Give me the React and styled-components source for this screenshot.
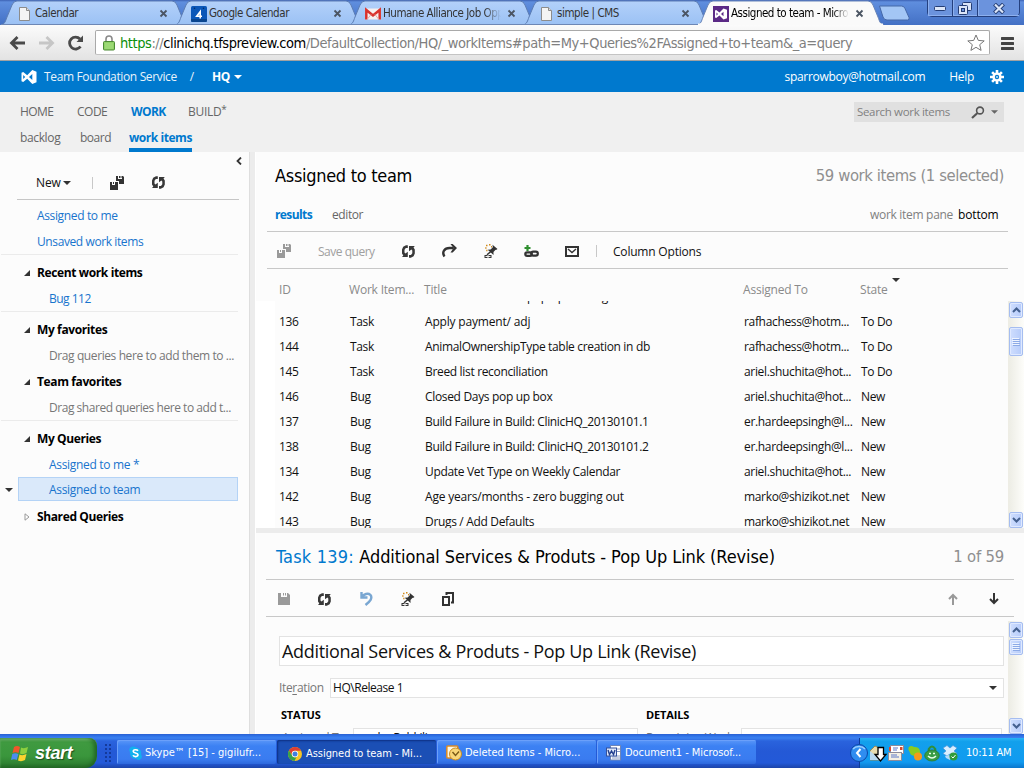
import React from 'react';
import styled, { createGlobalStyle, css } from 'styled-components';

const Global = createGlobalStyle`
  * { box-sizing: border-box; }
  body { margin: 0; overflow: hidden; background: #fcfcfc; }
  svg { display: block; flex: none; }
`;
const ui = `'Open Sans', 'Noto Sans', sans-serif`;
const tahoma = `'DejaVu Sans Condensed', 'DejaVu Sans', sans-serif`;

const Screen = styled.div`
  width: 1024px; height: 768px; overflow: hidden;
  display: flex; flex-direction: column;
  font: 12px/16px ${ui}; letter-spacing: -0.3px; color: #111; background: #fcfcfc;
`;
const Txt = styled.span`
  white-space: pre; flex: none;
  font-family: ${p => (p.$t ? tahoma : ui)};
  font-size: ${p => p.$s || 12}px;
  letter-spacing: ${p => p.$ls ?? -0.36}px;
  font-weight: ${p => (p.$b ? 700 : 400)};
  color: ${p => p.$c || '#111'};
  margin-left: ${p => p.$ml || 0}px;
`;
const ToolText = styled(Txt)`padding-top: 2px;`;

/* ---------- browser frame ---------- */
const TabStrip = styled.div`
  height: 25px; flex: none; display: flex; padding-left: 1px; position: relative;
  background: linear-gradient(#3d62b4 0, #5f8ede 2px, #4f7dd0 60%, #4370c4 100%);
`;
const TabBox = styled.div`
  width: 187px; height: 25px; margin-right: -13px; flex: none; position: relative;
  z-index: ${p => (p.$active ? 2 : 1)};
`;
const TabShape = styled.svg`position: absolute; inset: 0;`;
const TabInner = styled.div`
  position: relative; height: 25px; display: flex; align-items: center; padding: 2px 20px 0 16px;
`;
const TabLabel = styled.div`
  flex: 1; margin-left: 2px; white-space: nowrap; overflow: hidden; width: 0; margin-right: 6px;
  font: 11.5px/17px ${tahoma}; letter-spacing: ${p => p.$ls ?? -0.42}px; color: ${p => (p.$active ? '#000' : '#333')};
  ${p => p.$fade && css`mask-image: linear-gradient(90deg, #000 86%, transparent 100%);`}
`;
const WindowButtons = styled.div`
  position: absolute; right: 4px; top: 0; width: 93px; height: 17px; display: flex;
  border: 1px solid #24407f; border-top: 0; border-radius: 0 0 5px 5px; background: #6b93dd;
`;
const WinBtn = styled.div`
  width: ${p => p.$w}px; display: flex; justify-content: center; align-items: center;
  border-right: ${p => (p.$last ? 0 : 1)}px solid #24407f;
  box-shadow: inset 1px -1px 0 #8db0ee;
`;
const Toolbar = styled.div`
  height: 36px; flex: none; display: flex; align-items: center; padding: 1px 9px 0 9px;
  background: linear-gradient(#fbfbfb, #e3e3e3); border-bottom: 1px solid #a2a2a2;
`;
const Omnibox = styled.div`
  margin-left: 10px; width: 895px; height: 25px; background: #fff; display: flex; align-items: center;
  border: 1px solid #a9a9a9; border-bottom-color: #c4c4c4; border-radius: 2px; padding: 0 4px 0 7px; margin-top: -1px;
`;
const Url = styled.div`
  flex: 1; margin-left: 5px; white-space: nowrap; font: 14.5px/22px ${tahoma}; letter-spacing: -0.44px; color: #808080;
  i { font-style: normal; color: #0a8f0a; } b { font-weight: 400; color: #000; }
`;

/* ---------- service header ---------- */
const Header = styled.header`
  height: 31px; flex: none; background: #0079ce; display: flex; align-items: center; padding: 0 20px 0 21px;
`;
const Nav = styled.nav`
  height: 60px; flex: none; background: #f0f0f0; padding: 10px 20px 0; display: flex; justify-content: space-between;
`;
const NavRow = styled.div`display: flex; align-items: flex-start; height: ${p => p.$h}px; line-height: ${p => p.$lh}px;`;
const ActiveTab = styled.div`width: 63px; margin-left: 18px; height: 28px; border-bottom: 4px solid #0079ce;`;
const Star = styled.span`font-size: 10px; line-height: 14px; color: #666;`;
const Search = styled.div`
  width: 150px; height: 20px; background: #e0e0e0; display: flex; align-items: center; padding: 0 5px 0 3px;
`;
const Grow = styled.div`flex: 1;`;

/* ---------- work area ---------- */
const Work = styled.div`height: 582px; flex: none; display: flex;`;
const Sidebar = styled.aside`width: 249px; flex: none;`;
const SideTools = styled.div`
  display: flex; align-items: center; height: 34px; margin: 0 10px 0 17px; padding: 0 0 0 19px; border-bottom: 1px solid #c6c6c6;
`;
const Collapse = styled.div`display: flex; justify-content: flex-end; height: 14px; padding: 5px 7px 0 0;`;
const SideGroup = styled.div`
  width: 237px; margin-left: 1px; padding-top: ${p => p.$pt ?? 4}px; border-bottom: ${p => (p.$last ? 0 : 1)}px solid #ebebeb;
`;
const SideItem = styled.div`
  height: 26px; line-height: 24px; display: flex; align-items: center; padding: 2px 0 0 ${p => p.$in}px;
`;
const SelectedItem = styled.div`height: 26px; display: flex; align-items: flex-start; padding-left: 4px;`;
const SelectedCaret = styled.div`height: 25px; display: flex; align-items: center;`;
const Selected = styled.div`
  height: 24px; width: 220px; margin-left: 5px; background: #dae9fa; border: 1px solid #b4d3f6;
  line-height: 24px; padding-left: 30px;
`;
const VSplit = styled.div`width: 7px; flex: none; background: #ececec; border-left: 1px solid #dedede; border-right: 1px solid #fff;`;
const Main = styled.main`width: 768px; flex: none; display: flex; flex-direction: column;`;
const TitleRow = styled.div`
  display: flex; justify-content: space-between; height: ${p => p.$h}px; line-height: ${p => p.$lh || p.$h}px; padding: 0 20px 0 ${p => p.$l ?? 19}px;
`;
const Tools = styled.div`
  display: flex; align-items: center; height: 38px; margin: 0 ${p => p.$r}px 0 ${p => p.$l}px;
  border-top: 1px solid #c8c8c8; border-bottom: 1px solid #c8c8c8; padding: 2px ${p => p.$pr || 0}px 0 ${p => p.$pl}px;
`;
const Slot = styled.div`width: ${p => p.$w}px; margin-left: ${p => p.$ml || 0}px; flex: none; display: flex; align-items: center;`;
const Bar = styled.div`width: 1px; height: 12px; background: #c8c8c8; flex: none;`;
const GridHead = styled.div`height: 32px; display: flex; padding: 12px 0 0 23px; line-height: 17px;`;
const HeadCell = styled.div`width: ${p => p.$w}px; flex: none; color: #8a8a8a; letter-spacing: -0.2px; display: flex;`;
const SortMark = styled.div`margin: -3px 0 0 4px;`;
const GridBody = styled.div`height: 227px; display: flex; flex: none; background: #fff; padding-left: 19px;`;
const Rows = styled.div`
  flex: 1; height: 227px; overflow: hidden; background: #fcfcfc; display: flex; flex-direction: column; justify-content: flex-end;
`;
const Row = styled.div`display: flex; height: 25px; flex: none; line-height: 26px; padding-left: 4px; position: relative; top: 6px;`;
const Cell = styled.div`width: ${p => p.$w}px; flex: none; white-space: nowrap; letter-spacing: ${p => p.$ls ?? -0.33}px;`;
const ScrollTrack = styled.div`
  width: 16px; flex: none; background: linear-gradient(90deg, #ededE5, #fdfdfa); border-left: 1px solid #eeede5;
  display: flex; flex-direction: column; padding-top: 1px;
`;
const ScrollPart = styled.div`
  width: 14px; height: ${p => p.$h}px; margin-top: ${p => p.$mt || 0}px; flex: none; display: flex; align-items: center; justify-content: center;
  background: linear-gradient(90deg, #cfdefe, #b5cbfa); border: 1px solid #a5bdf0; border-radius: 2px; box-shadow: inset 0 0 0 1px #dfe9ff;
`;
const HSplit = styled.div`height: 5px; flex: none; background: #ececec;`;
const Form = styled.div`flex: 1; min-height: 0; display: flex; margin-top: 4px; overflow: hidden;`;
const Fields = styled.div`flex: 1; padding: 15px 4px 0 23px;`;
const TitleInput = styled.div`
  height: 30px; background: #fff; border: 1px solid #e3e3e3; line-height: 29px; padding-left: 2px;
`;
const FieldRow = styled.div`display: flex; margin-top: ${p => p.$mt}px; line-height: 20px; height: 20px;`;
const Input = styled.div`
  width: ${p => p.$w}px; height: 20px; background: #fff; border: 1px solid #e3e3e3; display: flex; align-items: center;
  justify-content: space-between; padding: 0 6px 0 2px; flex: none; line-height: 18px;
`;
const Label = styled.div`
  width: ${p => p.$w}px; padding-left: ${p => p.$pl || 0}px; flex: none; white-space: nowrap; color: #777;
  letter-spacing: ${p => p.$ls ?? -0.35}px; u { text-underline-offset: 2px; }
`;

/* ---------- taskbar ---------- */
const Taskbar = styled.footer`
  height: 34px; flex: none; display: flex; align-items: stretch;
  background: linear-gradient(#2a5fd0 0, #2f73e8 2px, #3c82f0 4px, #2a63dd 7px, #2459d6 50%, #2359d8 85%, #1c44a8 100%);
`;
const Start = styled.div`
  width: 97px; margin-top: 4px; display: flex; align-items: center; padding-left: 11px; border-radius: 0 8px 12px 0;
  background: linear-gradient(#5aa956 0, #3f9a40 15%, #3a963c 60%, #2f8232 85%, #256a27 100%);
  box-shadow: inset -3px 0 4px #1f6422, inset 0 2px 2px #7cc27a;
`;
const StartText = styled.span`
  font: italic 700 18px/20px 'Liberation Sans', sans-serif; color: #fff; letter-spacing: -0.3px; margin: 0 0 0 6px;
  text-shadow: 1px 1px 1px #1c4c1c;
`;
const Task = styled.div`
  width: 159px; height: 24px; margin: 6px 1px 0 0; border-radius: 2px; display: flex; align-items: center; padding-left: ${p => p.$pl || 12}px; flex: none;
  background: ${p => (p.$on ? '#1b4fb5' : 'linear-gradient(#5a96f8, #3c81f3 25%, #3a7bf0 80%, #2d68dc)')};
  box-shadow: ${p => (p.$on ? 'inset 1px 1px 2px #0d2f80' : 'inset 1px 1px 0 #6ba0fa')};
  padding-top: ${p => (p.$on ? 4 : 2)}px;
`;
const TaskLabel = styled.span`
  font: 11px/20px ${tahoma}; color: #fff; letter-spacing: ${p => p.$ls ?? 0}px; white-space: nowrap; margin-left: ${p => p.$ml ?? 4}px;
`;
const Dots = styled.div`
  width: 6px; height: 19px; margin: 10px 6px 0 8px;
  background: radial-gradient(circle at 1px 1px, #143a9c 1px, transparent 1.3px) 0 0 / 4px 4px;
`;
const Tray = styled.div`
  width: 165px; margin-top: 4px; display: flex; align-items: center; border-left: 1px solid #0c3b99;
  background: linear-gradient(#2ab3f5 0, #12a0ec 12%, #119af0 80%, #0b76cc 100%);
`;
const TrayToggle = styled.svg`margin-left: -10px;`;
const TrayIcons = styled.svg`margin-left: 2px;`;
const MenuIcon = styled.svg`margin-left: 11px;`;
const GearIcon = styled.svg`margin-left: 16px;`;
const NewTab = styled.svg`margin-left: 8px;`;

const Caret = ({ c = '#333', w = 8, h = 4 }) => (
  <svg width={w} height={h} viewBox="0 0 8 4"><path d="M0 0h8L4 4z" fill={c} /></svg>
);
const Close = () => (
  <svg width="9" height="9" viewBox="0 0 9 9"><path d="M1.500 1.500l6 6m0-6l-6 6" stroke="#4b5563" strokeWidth="1.800" /></svg>
);
const Page = () => (
  <svg width="16" height="16" viewBox="0 0 16 16"><path d="M2.500 1.500h7l3 3v10h-10z" fill="#f4f4f4" stroke="#8c8c8c" /><path d="M9.500 1.500v3h3" fill="#ddd" stroke="#8c8c8c" /></svg>
);
const VS = ({ s = 15, c = '#fff' }) => (
  <svg width={s} height={s} viewBox="0 0 16 16"><path fillRule="evenodd" fill={c} d="M0.500 3.800L2.200 3l4 3.200L11.300 1 15.500 2.800v10.400L11.300 15 6.200 9.800l-4 3.200-1.700-.8zM2.200 6v4l2-2zM11.300 5L8 8l3.300 3z" /></svg>
);
const Floppy = ({ c }) => <path fillRule="evenodd" fill={c} d="M0 0h3v4h6V0h1l2 2v10H0zM5 0h1v2.500H5zM7 0h1v2.500H7z" />;
const SaveAll = ({ c = '#333' }) => (
  <svg width="15" height="14" viewBox="0 0 15 14" fill={c}>
    <path d="M6 0h2v3h4V0h1l1 1v7H9V5H6zM9 0h1v2H9zM10.500 0h1v2h-1z" /><path d="M0 6h2v3h3V6h3v8H0zM3 6h1v2H3z" />
  </svg>
);
const Refresh = () => (
  <svg width="13" height="13" viewBox="0 0 13 13">
    <path d="M5.800 0.300H4L1.200 1.800 0 4.500v4L1.300 10.500 0 12h5.800V6.700L3.400 8.600 2.500 7.500V4.800L3.800 3h2z" fill="#383838" />
    <path d="M7 12.700h1.800l2.800-1.500L12.800 8.500v-4L11.500 2.500 12.800 1H7v5.300l2.400-1.900.9 1.100v2.700L9 10H7z" fill="#383838" />
  </svg>
);
const Redo = () => (
  <svg width="15" height="14" viewBox="0 0 15 14"><path d="M2.500 12.500C-.5 8 2.500 4 7.500 4h4" fill="none" stroke="#333" strokeWidth="2.400" /><path d="M8.500 0h2.200L15 4.100 10.700 8.500H8.500L11.500 4z" fill="#333" /></svg>
);
const Undo = () => (
  <svg width="13" height="14" viewBox="0 0 13 14" fill="none" stroke="#7aa7d2" strokeWidth="2.400"><path d="M1.500 0v5.500H7.500M1.500 5C4 2 8 .7 10.300 2.800 13 6 10 9.500 5.500 13" /></svg>
);
const Pin = () => (
  <svg width="14" height="14" viewBox="0 0 14 14">
    <path d="M2 1.500h1.500M5 .7h1.500M1.200 4h1.300M2.200 6.500h1.300M7 2.700h1" stroke="#d08a1c" strokeWidth="1.500" />
    <path d="M8.500 .8l5 4.200-1.500.9-.4-.2L9.500 8v3L3.700 5.800l2.900-.4 2.200-2.100z" fill="#333" /><path d="M7.500 7L3 10.800" stroke="#333" strokeWidth="1.500" />
    <path d="M.5 12.500h3m1 0h3" stroke="#333" strokeWidth="3" /><path d="M1.500 12.500h5" stroke="#eee" />
  </svg>
);
const AddLink = () => (
  <svg width="15" height="14" viewBox="0 0 15 14"><path d="M3.500 1v6M.5 4h6" stroke="#2f8f2f" strokeWidth="2.200" /><rect x="1.300" y="8.300" width="6.500" height="3.500" rx="1.800" fill="none" stroke="#333" strokeWidth="2.200" /><rect x="7.300" y="7.600" width="6.500" height="4" rx="1.900" fill="none" stroke="#333" strokeWidth="2.200" /></svg>
);
const Mail = () => (
  <svg width="14" height="11" viewBox="0 0 14 11"><rect x="1" y="1" width="12" height="9" fill="none" stroke="#333" strokeWidth="2" /><path d="M3 3l4 3.500L11 3" fill="none" stroke="#333" strokeWidth="1.400" /></svg>
);
const Copy = () => (
  <svg width="12" height="14" viewBox="0 0 12 14" fill="none" stroke="#333" strokeWidth="2"><path d="M1 5h6v8H1zM4.500 3V1H11v9.500H9" /></svg>
);
const Tri = ({ open }) => (
  <svg width="6" height="8" viewBox="0 0 6 8">{open ? <path d="M6 1v6H0z" fill="#333" /> : <path d="M1 .8v6.400L5 4z" fill="#fff" stroke="#999" />}</svg>
);
const Chev = ({ down }) => (
  <svg width="9" height="6" viewBox="0 0 9 6"><path d={down ? 'M1 1l3.500 3.500L8 1' : 'M1 5l3.500-3.500L8 5'} fill="none" stroke="#44608f" strokeWidth="2" /></svg>
);
const Grip = () => (
  <svg width="8" height="8" viewBox="0 0 8 8"><path d="M0 .5h7M0 2.500h7M0 4.500h7M0 6.500h7" stroke="#eef4ff" /><path d="M1 1.500h7M1 3.500h7M1 5.500h7M1 7.500h7" stroke="#8caae6" /></svg>
);
const Arrow = ({ c, down }) => (
  <svg width="10" height="12" viewBox="0 0 10 12"><path transform={down ? 'rotate(180 5 6)' : undefined} d="M5 12V2M1 6l4-4 4 4" fill="none" stroke={c} strokeWidth="2" /></svg>
);
const Calendar4 = () => (
  <svg width="16" height="16" viewBox="0 0 16 16"><rect width="16" height="16" rx="1.500" fill="#0b57b8" /><path d="M0 13h16v1.500a1.500 1.500 0 01-1.500 1.500h-13A1.500 1.500 0 010 14.500z" fill="#0a458f" /><circle cx="3.500" cy="2.300" r=".8" fill="#052c66" /><circle cx="12.500" cy="2.300" r=".8" fill="#052c66" /><path d="M9.200 12.500V5.700L5.700 10.300h5.300" stroke="#fff" strokeWidth="1.600" fill="none" /></svg>
);
const Gmail = () => (
  <svg width="16" height="16" viewBox="0 0 16 16"><rect y="2.500" width="16" height="11" rx="1" fill="#f6f0ef" /><path d="M1.300 13.500V4L8 9.500 14.700 4v9.500" fill="none" stroke="#d9322c" strokeWidth="2.500" /><path d="M2.500 13L6 8.500m7.500 4.500L10 8.500" stroke="#e5a9a5" /></svg>
);
const VSFav = () => (
  <svg width="16" height="16" viewBox="0 0 16 16"><rect width="16" height="16" fill="#5b2a86" /><path fillRule="evenodd" fill="#fff" d="M2 4.500L3.200 4l3.300 2.600L10.500 2.500l3.500 1.300v8.400l-3.500 1.300-4-4.100L3.200 12 2 11.500zM3.500 6.500v3L5 8zM10.500 5.800L8 8l2.500 2.200z" /></svg>
);
const Gear = () => (
  <GearIcon width="14" height="14" viewBox="0 0 14 14">
    <g stroke="#fff" strokeWidth="2.600"><path d="M7 0v14M0 7h14M2.100 2.100l9.800 9.800M11.900 2.100l-9.800 9.800" /></g>
    <circle cx="7" cy="7" r="4.600" fill="#fff" /><circle cx="7" cy="7" r="2.200" fill="#0079ce" /><circle cx="7" cy="7" r="1" fill="#bfe0f6" />
  </GearIcon>
);

const Tab = ({ icon, label, active, fade, ls }) => (
  <TabBox $active={active}>
    <TabShape width="187" height="25" viewBox="0 0 187 25">
      <defs><linearGradient id="tabfill" x2="0" y2="1"><stop stopColor="#b3d1fa" /><stop offset="1" stopColor="#9bc1f4" /></linearGradient></defs>
      <path d="M0 25C4 24 4.500 21 6 17L11 5Q12.500 1 16 1H171Q174.500 1 176 5L181 17C182.500 21 183 24 187 25z" fill={active ? '#fafafa' : 'url(#tabfill)'} stroke={active ? '#6683b8' : '#5c7db4'} />
      {!active && <path d="M0 24.500h187" stroke="#6d87b5" />}
      {active && <path d="M1 24.500h185" stroke="#fafafa" strokeWidth="2" />}
    </TabShape>
    <TabInner>{icon}<TabLabel $active={active} $fade={fade} $ls={ls}>{label}</TabLabel><Close /></TabInner>
  </TabBox>
);

const rows = [
  ['', '', 'Additional Services pop up message', '', ''],
  ['136', 'Task', 'Apply payment/ adj', 'rafhachess@hotm...', 'To Do'],
  ['144', 'Task', 'AnimalOwnershipType table creation in db', 'rafhachess@hotm...', 'To Do'],
  ['145', 'Task', 'Breed list reconciliation', 'ariel.shuchita@hot...', 'To Do'],
  ['146', 'Bug', 'Closed Days pop up box', 'ariel.shuchita@hot...', 'New'],
  ['137', 'Bug', 'Build Failure in Build: ClinicHQ_20130101.1', 'er.hardeepsingh@l...', 'New'],
  ['138', 'Bug', 'Build Failure in Build: ClinicHQ_20130101.2', 'er.hardeepsingh@l...', 'New'],
  ['134', 'Bug', 'Update Vet Type on Weekly Calendar', 'ariel.shuchita@hot...', 'New'],
  ['142', 'Bug', 'Age years/months - zero bugging out', 'marko@shizikot.net', 'New'],
  ['143', 'Bug', 'Drugs / Add Defaults', 'marko@shizikot.net', 'New'],
];
const titleSpacing = { 1: -0.18, 5: -0.36, 6: -0.36, 8: -0.2 };
const LINK = '#1874cd';

const GroupTitle = ({ children, closed }) => (
  <SideItem $in={23}><Tri open={!closed} /><Txt $b $ml={7} $c="#000" $ls={-0.38}>{children}</Txt></SideItem>
);

export default function App() {
  return (
    <Screen>
      <Global />
      <TabStrip>
        <Tab icon={<Page />} label="Calendar" />
        <Tab icon={<Calendar4 />} label="Google Calendar" />
        <Tab icon={<Gmail />} label="Humane Alliance Job Opp" fade ls={-0.48} />
        <Tab icon={<Page />} label="simple | CMS" />
        <Tab icon={<VSFav />} label="Assigned to team - Micro" active fade ls={-0.48} />
        <NewTab width="34" height="25" viewBox="0 0 34 25"><path d="M1.500 6.500h22q2.500 0 3.500 2.500l4 9q.8 2.500-1.500 2.500H9q-3 0-4-3z" transform="translate(-1 -.5)" fill="#a3c6f5" stroke="#4568a8" /></NewTab>
        <WindowButtons>
          <WinBtn $w={25}><svg width="12" height="6" viewBox="0 0 12 6"><rect x=".5" y="1.500" width="11" height="4" rx="1" fill="#dce6f8" stroke="#243d75" /></svg></WinBtn>
          <WinBtn $w={25}><svg width="14" height="13" viewBox="0 0 14 13" fill="#dce6f8" stroke="#243d75"><rect x="4.500" y=".5" width="9" height="8" rx="1" /><rect x=".5" y="3.500" width="9" height="9" rx="1" /><rect x="3.500" y="6.500" width="3" height="3" fill="#6b93dd" /></svg></WinBtn>
          <WinBtn $w={41} $last><svg width="12" height="11" viewBox="0 0 12 11"><path d="M1.500 1l9 9m0-9l-9 9" stroke="#243d75" strokeWidth="4" /><path d="M2 1.500l8 8m0-8l-8 8" stroke="#dce6f8" strokeWidth="2.200" /></svg></WinBtn>
        </WindowButtons>
      </TabStrip>
      <Toolbar>
        <svg width="76" height="18" viewBox="0 0 76 18" fill="none" strokeWidth="2.800">
          <path d="M16 9H3M8.500 3L2.500 9l6 6" stroke="#4a4a4a" /><path d="M30 9h13M37.500 3l6 6-6 6" stroke="#c6c6c6" />
          <path d="M71.500 12.500A6 6 0 1 1 71 5" stroke="#4a4a4a" /><path d="M74 1.500v6.500H67.500z" fill="#4a4a4a" />
        </svg>
        <Omnibox>
          <svg width="12" height="16" viewBox="0 0 12 16"><path d="M3 7V4a3 3 0 016 0v3" fill="none" stroke="#8a8a8a" strokeWidth="1.600" /><rect x=".5" y="6.500" width="11" height="8.500" rx="1" fill="#8fd167" stroke="#4b8a35" /><path d="M2 9h8M2 11h8M2 13h8" stroke="#a9e084" /></svg>
          <Url><i>https</i>://<b>clinichq.tfspreview.com</b>/DefaultCollection/HQ/_workItems#path=My+Queries%2FAssigned+to+team&amp;_a=query</Url>
          <svg width="18" height="17" viewBox="0 0 18 17"><path d="M9 1l2.300 5.400 5.900.5-4.500 3.800 1.400 5.700L9 13.300l-5.100 3.100 1.400-5.700L.8 6.900l5.900-.5z" fill="#fff" stroke="#777" /></svg>
        </Omnibox>
        <MenuIcon width="13" height="13" viewBox="0 0 13 13"><path d="M1 1.500h11M1 6.500h11M1 11.500h11" stroke="#444" strokeWidth="3" strokeLinecap="round" /></MenuIcon>
      </Toolbar>

      <Header>
        <VS s={16} />
        <Txt $c="#e8f3fb" $ml={7} $ls={-0.36}>Team Foundation Service</Txt>
        <Txt $c="#e8f3fb" $ml={13}>/</Txt>
        <Txt $c="#fff" $b $ml={18}>HQ</Txt>
        <Slot $w={12} $ml={4}><Caret c="#fff" /></Slot>
        <Grow />
        <Txt $c="#fff" $ls={-0.3}>sparrowboy@hotmail.com</Txt>
        <Txt $c="#fff" $ml={24} $ls={-0.3}>Help</Txt>
        <Gear />
      </Header>

      <Nav>
        <div>
          <NavRow $h={22} $lh={20}>
            <Slot $w={57}><Txt $c="#666" $ls={-0.6}>HOME</Txt></Slot><Slot $w={54}><Txt $c="#666" $ls={-0.5}>CODE</Txt></Slot>
            <Slot $w={57}><Txt $c="#0079ce" $b $ls={-0.6}>WORK</Txt></Slot><Txt $c="#666" $ls={-0.3}>BUILD</Txt><Star>*</Star>
          </NavRow>
          <NavRow $h={28} $lh={28}>
            <Slot $w={60}><Txt $c="#666">backlog</Txt></Slot><Slot $w={31}><Txt $c="#666" $ls={-0.5}>board</Txt></Slot>
            <ActiveTab><Txt $c="#0079ce" $b $ls={-0.45}>work items</Txt></ActiveTab>
          </NavRow>
        </div>
        <Search>
          <Txt $c="#808080" $s={11.5} $ls={-0.33}>Search work items</Txt><Grow />
          <svg width="14" height="13" viewBox="0 0 14 13"><circle cx="9" cy="4.500" r="3.400" fill="none" stroke="#555" strokeWidth="1.600" /><path d="M6.500 7L1 12" stroke="#555" strokeWidth="2.200" /></svg>
          <Slot $w={8} $ml={6}><Caret c="#666" w={7} /></Slot>
        </Search>
      </Nav>

      <Work>
        <Sidebar>
          <Collapse><svg width="6" height="8" viewBox="0 0 6 8"><path d="M5 .5L1.500 4 5 7.500" fill="none" stroke="#333" strokeWidth="1.800" /></svg></Collapse>
          <SideTools>
            <Txt $ls={-0.15}>New</Txt><Slot $w={29} $ml={2.5}><Caret /></Slot><Bar />
            <Slot $w={42} $ml={17}><SaveAll /></Slot><Refresh />
          </SideTools>
          <SideGroup $pt={2}>
            <SideItem $in={36}><Txt $c={LINK}>Assigned to me</Txt></SideItem>
            <SideItem $in={36}><Txt $c={LINK} $ls={-0.4}>Unsaved work items</Txt></SideItem>
          </SideGroup>
          <SideGroup><GroupTitle>Recent work items</GroupTitle><SideItem $in={48}><Txt $c={LINK} $ls={-0.5}>Bug 112</Txt></SideItem></SideGroup>
          <SideGroup>
            <GroupTitle>My favorites</GroupTitle><SideItem $in={48}><Txt $c="#777" $ls={-0.4}>Drag queries here to add them to ...</Txt></SideItem>
            <GroupTitle>Team favorites</GroupTitle><SideItem $in={48}><Txt $c="#777" $ls={-0.46}>Drag shared queries here to add t...</Txt></SideItem>
          </SideGroup>
          <SideGroup $last>
            <GroupTitle>My Queries</GroupTitle>
            <SideItem $in={48}><Txt $c={LINK} $ls={-0.32}>Assigned to me *</Txt></SideItem>
            <SelectedItem><SelectedCaret><Caret /></SelectedCaret><Selected><Txt $c={LINK} $ls={-0.32}>Assigned to team</Txt></Selected></SelectedItem>
            <GroupTitle closed>Shared Queries</GroupTitle>
          </SideGroup>
        </Sidebar>
        <VSplit />
        <Main>
          <TitleRow $h={47}><Txt $t $s={18} $ls={-0.3} $c="#000">Assigned to team</Txt><Txt $t $s={16.5} $c="#8f8f8f" $ls={-0.4}>59 work items (1 selected)</Txt></TitleRow>
          <TitleRow $h={32}>
            <Slot $w={300}><Slot $w={57}><Txt $b $c="#0079ce" $ls={-0.6}>results</Txt></Slot><Txt $c="#666" $ls={-0.4}>editor</Txt></Slot>
            <Slot $w={134}><Txt $c="#808080" $ls={-0.3}>work item pane</Txt><Txt $c="#000" $ml={5} $ls={-0.15}>bottom</Txt></Slot>
          </TitleRow>
          <Tools $l={11} $r={16} $pl={10}>
            <Slot $w={41}><SaveAll c="#9a9a9a" /></Slot><Slot $w={84}><ToolText $c="#a0a0a0" $ls={-0.48}>Save query</ToolText></Slot>
            <Slot $w={40}><Refresh /></Slot><Slot $w={42}><Redo /></Slot><Slot $w={40}><Pin /></Slot><Slot $w={41}><AddLink /></Slot><Slot $w={31}><Mail /></Slot>
            <Bar /><ToolText $ml={16} $ls={-0.2}>Column Options</ToolText>
          </Tools>
          <GridHead>
            <HeadCell $w={70}>ID</HeadCell><HeadCell $w={75}>Work Item...</HeadCell><HeadCell $w={319}>Title</HeadCell>
            <HeadCell $w={117}>Assigned To</HeadCell><HeadCell $w={60}>State<SortMark><Caret /></SortMark></HeadCell>
          </GridHead>
          <GridBody>
            <Rows>
              {rows.map((r, i) => (
                <Row key={i}><Cell $w={71}>{r[0]}</Cell><Cell $w={75}>{r[1]}</Cell><Cell $w={319} $ls={titleSpacing[i]}>{r[2]}</Cell><Cell $w={117}>{r[3]}</Cell><Cell $w={60}>{r[4]}</Cell></Row>
              ))}
            </Rows>
            <ScrollTrack><ScrollPart $h={16}><Chev /></ScrollPart><ScrollPart $h={29} $mt={9}><Grip /></ScrollPart><ScrollPart $h={16} $mt={156}><Chev down /></ScrollPart></ScrollTrack>
          </GridBody>
          <HSplit />
          <TitleRow $h={46} $lh={47} $l={20}>
            <span><Txt $t $s={18} $c="#0079ce" $ls={0.2}>Task 139: </Txt><Txt $t $s={18} $c="#000" $ls={-0.09}>Additional Services &amp; Produts - Pop Up Link (Revise)</Txt></span>
            <Txt $t $s={16.5} $c="#8f8f8f" $ls={-0.2}>1 of 59</Txt>
          </TitleRow>
          <Tools $l={10} $r={10} $pl={12} $pr={15}>
            <Slot $w={40}><svg width="12" height="12" viewBox="0 0 12 12"><Floppy c="#9a9a9a" /></svg></Slot>
            <Slot $w={42}><Refresh /></Slot><Slot $w={41}><Undo /></Slot><Slot $w={41}><Pin /></Slot><Copy />
            <Grow /><Slot $w={41}><Arrow c="#999" /></Slot><Arrow c="#333" down />
          </Tools>
          <Form>
            <Fields>
              <TitleInput><Txt $s={18} $ls={-0.33}>Additional Services &amp; Produts - Pop Up Link (Revise)</Txt></TitleInput>
              <FieldRow $mt={12}><Label $w={51}>Ite<u>r</u>ation</Label><Input $w={674}><Txt $ls={-0.45}>HQ\Release 1</Txt><Caret /></Input></FieldRow>
              <FieldRow $mt={7}><Slot $w={367}><Txt $b $ml={2} $s={11} $c="#000" $ls={-0.2}>STATUS</Txt></Slot><Txt $b $s={11} $c="#000" $ls={-0.15}>DETAILS</Txt></FieldRow>
              <FieldRow $mt={3}>
                <Label $w={74} $pl={3}>Assigned To</Label><Input $w={285}><Txt>marko Rabkili</Txt></Input>
                <Label $w={103} $pl={8}>Remaining Work</Label><Input $w={261} />
              </FieldRow>
            </Fields>
            <ScrollTrack><ScrollPart $h={16}><Chev /></ScrollPart><ScrollPart $h={16} $mt={1}><Grip /></ScrollPart><ScrollPart $h={16} $mt={63}><Chev down /></ScrollPart></ScrollTrack>
          </Form>
        </Main>
      </Work>

      <Taskbar>
        <Start>
          <svg width="18" height="17" viewBox="0 0 18 17"><path d="M3 2q3-2 6 0L7.500 8q-3-1.500-6 0z" fill="#f0562b" /><path d="M10 2.500q3 1.500 7-.5L15.500 8q-3.500 2-6.500.5z" fill="#8ccf3f" /><path d="M1.300 9q3-1.500 6 0L5.800 15q-3-1.500-5.800 0z" fill="#4a8df0" /><path d="M8.500 9.500q3 1.500 7-.5L14 15q-3.500 2-7 .5z" fill="#fcd32f" /></svg>
          <StartText>start</StartText>
        </Start>
        <Dots />
        <Task>
          <svg width="13" height="14" viewBox="0 0 13 14"><path d="M4 .5a4 4 0 013 1 5.500 5.500 0 015 7 3.300 3.300 0 01-5 4.300A5.700 5.700 0 011 6 3.500 3.500 0 014 .5z" fill="#12b0ee" /><path d="M9 4.700C8 3.300 4.200 3.300 4.200 5.300S9 6.500 9 8.800s-4.200 2.300-5 .5" fill="none" stroke="#fff" strokeWidth="1.600" /></svg>
          <TaskLabel $ml={3}>Skype™ [15] - gigilufr...</TaskLabel>
        </Task>
        <Task $on $pl={11}>
          <svg width="14" height="14" viewBox="0 0 14 14"><circle cx="7" cy="7" r="7" fill="#f6c524" /><path d="M1 3.400A7 7 0 0113.100 3.700H7A3.300 3.300 0 004 8.500z" fill="#df3f33" /><path d="M1 3.400l3 5.200A3.300 3.300 0 008.500 10L6.500 14A7 7 0 011 3.400z" fill="#35a34a" /><circle cx="7" cy="7" r="3.200" fill="#fff" /><circle cx="7" cy="7" r="2.500" fill="#3f7fe0" /></svg>
          <TaskLabel $ls={-0.05}>Assigned to team - Mi...</TaskLabel>
        </Task>
        <Task $pl={9}>
          <svg width="16" height="16" viewBox="0 0 16 16"><rect x=".8" y="1" width="11" height="12" rx="1" fill="#fff8e0" stroke="#d98b2b" strokeWidth="1.600" /><circle cx="9.500" cy="9" r="6" fill="#f8d679" stroke="#c98a22" /><path d="M6.500 7l3 3.500L13 6.500" fill="none" stroke="#7a5a18" strokeWidth="1.400" /></svg>
          <TaskLabel $ml={3}>Deleted Items - Micro...</TaskLabel>
        </Task>
        <Task $pl={9}>
          <svg width="16" height="16" viewBox="0 0 16 16"><rect x="4.500" y=".5" width="10" height="14.500" fill="#fff" stroke="#6f86b8" /><path d="M11 4h3M11 6.500h3M6 11h8M6 13h8" stroke="#8a9cc5" /><rect x=".5" y="3" width="10" height="8" fill="#dfe8fa" stroke="#33519c" /><path d="M2 5l1.500 4.500L5.500 6l2 3.500L9 5" fill="none" stroke="#23408f" strokeWidth="1.400" /></svg>
          <TaskLabel $ml={3} $ls={-0.05}>Document1 - Microsof...</TaskLabel>
        </Task>
        <Grow />
        <Tray>
          <TrayToggle width="18" height="18" viewBox="0 0 18 18"><circle cx="9" cy="9" r="8.500" fill="#2f8df0" stroke="#0d47a8" /><path d="M3 5a7 5 0 0112 0" fill="none" stroke="#9dd0ff" strokeWidth="1.500" /><path d="M10.500 5L7 9l3.500 4" fill="none" stroke="#fff" strokeWidth="2" /></TrayToggle>
          <TrayIcons width="88" height="18" viewBox="0 0 88 18">
            <path d="M0 7l5-5 6 3v11H0z" fill="#e9dcae" stroke="#9a8b55" /><path d="M0 7l6 5 6-5v9H0z" fill="#b9d9f0" /><path d="M8 3.500h5.500v7H16L10.500 17 5 10.500h3z" fill="#fff" stroke="#000" strokeWidth="1.300" />
            <rect x="20.500" y="1.500" width="13" height="8" fill="#fff" stroke="#8b8b9b" /><rect x="18.500" y="8.500" width="13" height="8" fill="#f4f0e4" stroke="#8b8b9b" /><path d="M21 11h6M21 13h8M23 4h5M23 6h4" stroke="#5a78c8" /><path d="M30 3h2.500v3H30zM19 3h2v4h-2z" fill="#d94b2b" />
            <path d="M38.500 3.500Q41 1 44 3q5-.5 6 4 .5 3-1 4-3 1.500-5 1-4-1-4.500-4.500-1.500-2-1-4z" fill="#8acb22" /><circle cx="48" cy="12.500" r="4" fill="#f59a1c" />
            <path d="M58.800 8V5q3.200-5 6.400 0V8" fill="none" stroke="#2f8f3b" strokeWidth="2.200" /><ellipse cx="62" cy="11.500" rx="7.300" ry="5.500" fill="#3a9c45" stroke="#277a31" strokeWidth=".8" /><path d="M58 12q4 4 8 0M59 9.500h2M63 9.500h2" fill="none" stroke="#e8ffe8" strokeWidth="1.500" />
            <path d="M73 4l4-2.500L80 4l3-2.500L87 4l-3 3 3 2.500-4 2.500-3-2-3 2-4-2.500L76 7z" fill="#d9eeff" stroke="#4a94d8" strokeWidth=".7" /><path d="M75 12l4-1 2 2-1 3-4-2z" fill="#b5dbfa" /><circle cx="83.500" cy="12.500" r="4" fill="#2f9c3b" /><path d="M81.500 12.500l1.500 1.500 2.500-3" stroke="#fff" fill="none" />
          </TrayIcons>
          <TaskLabel $ml={8} $ls={-0.2}>10:11 AM</TaskLabel>
        </Tray>
      </Taskbar>
    </Screen>
  );
}
